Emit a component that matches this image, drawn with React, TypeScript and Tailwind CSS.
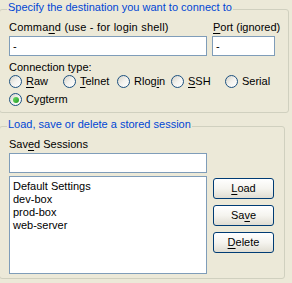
import React from "react";

type RadioProps = { label: React.ReactNode; checked?: boolean };

function Radio({ label, checked }: RadioProps) {
    return (
        <div className="flex items-center gap-[4px] h-[13px]">
            <span className="w-[13px] h-[13px] shrink-0 rounded-full border border-[#1c5180] bg-gradient-to-br from-[#d6d3c8] via-[#f3f2ee] to-white flex items-center justify-center">
                {checked && (
                    <span className="w-[6px] h-[6px] rounded-full bg-gradient-to-br from-[#6ade66] to-[#1f9a1f]" />
                )}
            </span>
            <span className="whitespace-nowrap">{label}</span>
        </div>
    );
}

function XpButton({ children }: { children: React.ReactNode }) {
    return (
        <button className="w-[61px] h-[21px] rounded-[3px] border border-[#003c74] bg-gradient-to-b from-white via-[#f5f4ef] to-[#e0ddd2] text-black flex items-center justify-center">
            {children}
        </button>
    );
}

const u = (s: string) => <span className="underline underline-offset-[2px]">{s}</span>;

export default function App() {
    const sessions = ["Default Settings", "dev-box", "prod-box", "web-server"];

    return (
        <div className="w-[292px] h-[283px] overflow-hidden bg-[#ece9d8] text-black text-[11px] leading-[13px] font-['Liberation_Sans',Arial,sans-serif]">
            {/* Destination group */}
            <fieldset className="-ml-px w-[286px] h-[113px] border border-[#d0d0bf] rounded-[3px] pl-[9px] pr-[9px]">
                <legend className="-ml-[2px] px-[1px] pb-[4px] leading-[14px] text-[#0046d5] whitespace-nowrap">
                    Specify the destination you want to connect to
                </legend>
                <div className="flex gap-[5px] mt-[3px]">
                    <div className="flex flex-col w-[198px]">
                        <span className="whitespace-nowrap tracking-[0.2px]">Comma{u("n")}d (use - for login shell)</span>
                        <div className="mt-[2px] h-[20px] border border-[#7f9db9] bg-white pl-[3px] flex items-center">-</div>
                    </div>
                    <div className="flex flex-col w-[63px]">
                        <span className="pl-[1px] whitespace-nowrap">{u("P")}ort (ignored)</span>
                        <div className="mt-[2px] h-[20px] border border-[#7f9db9] bg-white pl-[3px] flex items-center">-</div>
                    </div>
                </div>
                <div className="mt-[5px]">Connection type:</div>
                <div className="mt-[1px] grid grid-cols-[repeat(5,54px)] gap-y-[5px]">
                    <Radio label={<>{u("R")}aw</>} />
                    <Radio label={<>{u("T")}elnet</>} />
                    <Radio label={<>Rlog{u("i")}n</>} />
                    <Radio label={<>{u("S")}SH</>} />
                    <Radio label="Serial" />
                    <Radio label="Cygterm" checked />
                </div>
            </fieldset>

            {/* Stored sessions group */}
            <fieldset className="-ml-px mt-[4px] w-[286px] h-[162px] border border-[#d0d0bf] rounded-[3px] pl-[9px] pr-[9px]">
                <legend className="-ml-[2px] px-[1px] pb-[4px] leading-[14px] text-[#0046d5] whitespace-nowrap">
                    Load, save or delete a stored session
                </legend>
                <div className="mt-[3px]">Sav{u("e")}d Sessions</div>
                <div className="mt-[2px] w-[198px] h-[20px] border border-[#7f9db9] bg-white" />
                <div className="mt-[3px] flex gap-[6px]">
                    <div className="w-[198px] h-[98px] border border-[#7f9db9] bg-white pl-[3px] pt-[3px]">
                        {sessions.map((s) => (
                            <div key={s}>{s}</div>
                        ))}
                    </div>
                    <div className="flex flex-col gap-[6px] pt-[2px]">
                        <XpButton>{u("L")}oad</XpButton>
                        <XpButton>Sa{u("v")}e</XpButton>
                        <XpButton>{u("D")}elete</XpButton>
                    </div>
                </div>
            </fieldset>
        </div>
    );
}
